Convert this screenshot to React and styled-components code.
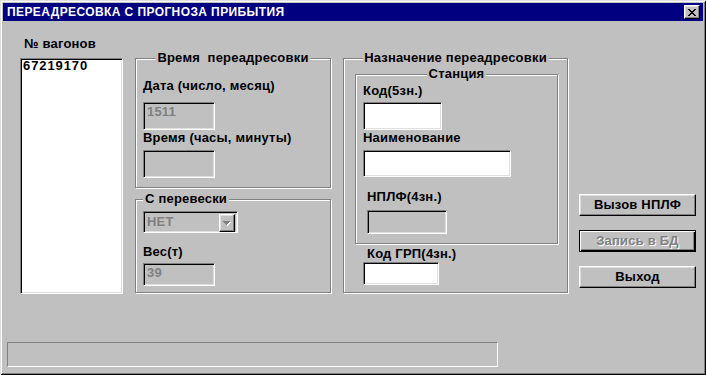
import React from 'react';
import styled, { createGlobalStyle, css } from 'styled-components';

const GlobalStyle = createGlobalStyle`
  html, body {
    margin: 0;
    padding: 0;
    background: #c0c0c0;
  }
  body {
    font-family: "Liberation Sans", Arial, sans-serif;
  }
`;

const sunken = css`
  box-sizing: border-box;
  border: 1px solid;
  border-color: #808080 #fff #fff #808080;
  box-shadow: inset 1px 1px #000, inset -1px -1px #dfdfdf;
`;

const raised = css`
  box-sizing: border-box;
  border: 1px solid;
  border-color: #fff #000 #000 #fff;
  box-shadow: inset -1px -1px #808080, inset 1px 1px #dfdfdf;
`;

const Window = styled.div`
  width: 706px;
  height: 375px;
  box-sizing: border-box;
  padding: 3px;
  background: #c0c0c0;
  box-shadow: inset 1px 1px #dfdfdf, inset -1px -1px #000,
    inset 2px 2px #fff, inset -2px -2px #808080;
  display: flex;
  flex-direction: column;
  font: bold 13px "Liberation Sans", Arial, sans-serif;
  letter-spacing: 0.2px;
  color: #000;
`;

const TitleBar = styled.div`
  height: 18px;
  flex: none;
  background: #000080;
  color: #fff;
  display: flex;
  align-items: center;
  justify-content: space-between;
  padding: 0 3px 0 4px;
`;

const Title = styled.span`
  font-size: 12px;
  line-height: 18px;
  letter-spacing: 0.4px;
  white-space: pre;
`;

const CloseButton = styled.div`
  ${raised};
  width: 16px;
  height: 14px;
  background: #c0c0c0;
  display: flex;
  align-items: center;
  justify-content: center;
`;

const Main = styled.div`
  display: flex;
  align-items: flex-start;
  padding: 16px 0 0 17px;
`;

const ListColumn = styled.div`
  width: 103px;
  display: flex;
  flex-direction: column;
`;

const Label = styled.div`
  line-height: 14px;
  height: 14px;
  white-space: pre;
  margin: ${({ $mt = 0 }) => $mt}px 0 ${({ $mb = 0 }) => $mb}px ${({ $ml = 0 }) => $ml}px;
`;

const ListBox = styled.div`
  ${sunken};
  margin-top: 7px;
  height: 236px;
  background: #fff;
  padding: 0 2px;
  line-height: 14px;
  letter-spacing: 0.9px;
`;

const Column = styled.div`
  display: flex;
  flex-direction: column;
  width: ${({ $w }) => $w}px;
  margin: ${({ $mt }) => $mt}px 0 0 ${({ $ml }) => $ml}px;
  gap: ${({ $gap = 0 }) => $gap}px;
`;

const Group = styled.div`
  position: relative;
  box-sizing: border-box;
  display: flex;
  flex-direction: column;
  align-items: flex-start;
  height: ${({ $h }) => $h}px;
  width: ${({ $w }) => ($w ? `${$w}px` : 'auto')};
  border: 1px solid #808080;
  box-shadow: inset 1px 1px #fff, 1px 1px #fff;
  padding: ${({ $pt }) => $pt}px 0 0 ${({ $pl }) => $pl}px;
  margin: ${({ $mt = 0 }) => $mt}px 0 0 ${({ $ml = 0 }) => $ml}px;
`;

const Caption = styled.span`
  position: absolute;
  top: -8px;
  line-height: 14px;
  padding: 0 2px;
  background: #c0c0c0;
  white-space: pre;
  ${({ $center }) =>
    $center
      ? css`
          left: 50%;
          transform: translateX(-50%);
        `
      : css`
          left: 7px;
        `}
`;

const TextBox = styled.div`
  ${sunken};
  width: ${({ $w }) => $w}px;
  height: ${({ $h }) => $h}px;
  margin-left: ${({ $ml = 0 }) => $ml}px;
  background: ${({ $disabled }) => ($disabled ? '#c0c0c0' : '#fff')};
  color: #808080;
  padding: 2px 3px 0;
  line-height: 14px;
`;

const Combo = styled.div`
  ${sunken};
  width: 95px;
  height: 22px;
  display: flex;
  align-items: flex-start;
  justify-content: space-between;
  padding: 2px;
  color: #808080;
`;

const ComboText = styled.span`
  line-height: 14px;
  padding: 1px 0 0 1px;
`;

const ComboButton = styled.div`
  ${raised};
  width: 16px;
  height: 18px;
  background: #c0c0c0;
  display: flex;
  align-items: center;
  justify-content: center;
`;

const Button = styled.div`
  ${raised};
  height: 22px;
  background: #c0c0c0;
  display: flex;
  align-items: center;
  justify-content: center;
  line-height: 14px;
  ${({ $default }) =>
    $default &&
    css`
      border: 1px solid #000;
      box-shadow: inset 1px 1px #fff, inset -1px -1px #000,
        inset -2px -2px #808080;
    `}
  ${({ $disabled }) =>
    $disabled &&
    css`
      color: #808080;
      text-shadow: 1px 1px #fff;
    `}
`;

const StatusBar = styled.div`
  box-sizing: border-box;
  width: 491px;
  height: 25px;
  margin: auto 0 5px 4px;
  border: 1px solid;
  border-color: #808080 #fff #fff #808080;
`;

const CloseGlyph = () => (
  <svg width="8" height="7" viewBox="0 0 8 7" shapeRendering="crispEdges">
    <path d="M0 0h2v1h-2zM6 0h2v1h-2zM1 1h2v1h-2zM5 1h2v1h-2zM2 2h4v1h-4zM3 3h2v1h-2zM2 4h4v1h-4zM1 5h2v1h-2zM5 5h2v1h-2zM0 6h2v1h-2zM6 6h2v1h-2z" fill="#000" />
  </svg>
);

const ArrowGlyph = () => (
  <svg width="8" height="5" viewBox="0 0 8 5" shapeRendering="crispEdges">
    <path d="M1 1h7v1h-7zM2 2h5v1h-5zM3 3h3v1h-3zM4 4h1v1h-1z" fill="#fff" />
    <path d="M0 0h7v1h-7zM1 1h5v1h-5zM2 2h3v1h-3zM3 3h1v1h-1z" fill="#808080" />
  </svg>
);

const App = () => (
  <>
    <GlobalStyle />
    <Window>
      <TitleBar>
        <Title>ПЕРЕАДРЕСОВКА С ПРОГНОЗА ПРИБЫТИЯ</Title>
        <CloseButton>
          <CloseGlyph />
        </CloseButton>
      </TitleBar>
      <Main>
        <ListColumn>
          <Label $ml={4}>№ вагонов</Label>
          <ListBox>67219170</ListBox>
        </ListColumn>

        <Column $w={196} $mt={21} $ml={12} $gap={11}>
          <Group $h={130} $pt={20} $pl={7}>
            <Caption $center>Время  переадресовки</Caption>
            <Label $mb={9}>Дата (число, месяц)</Label>
            <TextBox $w={72} $h={28} $disabled>1511</TextBox>
            <Label $mt={1} $mb={5}>Время (часы, минуты)</Label>
            <TextBox $w={72} $h={28} $disabled />
          </Group>
          <Group $h={94} $pt={11} $pl={7}>
            <Caption>С перевески</Caption>
            <Combo>
              <ComboText>НЕТ</ComboText>
              <ComboButton>
                <ArrowGlyph />
              </ComboButton>
            </Combo>
            <Label $mt={12} $mb={4}>Вес(т)</Label>
            <TextBox $w={72} $h={23} $disabled>39</TextBox>
          </Group>
        </Column>

        <Column $w={225} $mt={21} $ml={12}>
          <Group $h={235} $pt={15} $pl={11}>
            <Caption $center>Назначение переадресовки</Caption>
            <Group $h={170} $w={203} $pt={9} $pl={7}>
              <Caption $center>Станция</Caption>
              <Label $mb={4}>Код(5зн.)</Label>
              <TextBox $w={79} $h={28} />
              <Label $mt={1} $mb={5}>Наименование</Label>
              <TextBox $w={148} $h={27} />
              <Label $mt={13} $mb={6} $ml={4}>НПЛФ(4зн.)</Label>
              <TextBox $w={80} $h={24} $ml={4} $disabled />
            </Group>
            <Label $mt={3} $mb={1} $ml={12}>Код ГРП(4зн.)</Label>
            <TextBox $w={76} $h={23} $ml={8} />
          </Group>
        </Column>

        <Column $w={117} $mt={157} $ml={11} $gap={14}>
          <Button>Вызов НПЛФ</Button>
          <Button $default $disabled>Запись в БД</Button>
          <Button>Выход</Button>
        </Column>
      </Main>
      <StatusBar />
    </Window>
  </>
);

export default App;
